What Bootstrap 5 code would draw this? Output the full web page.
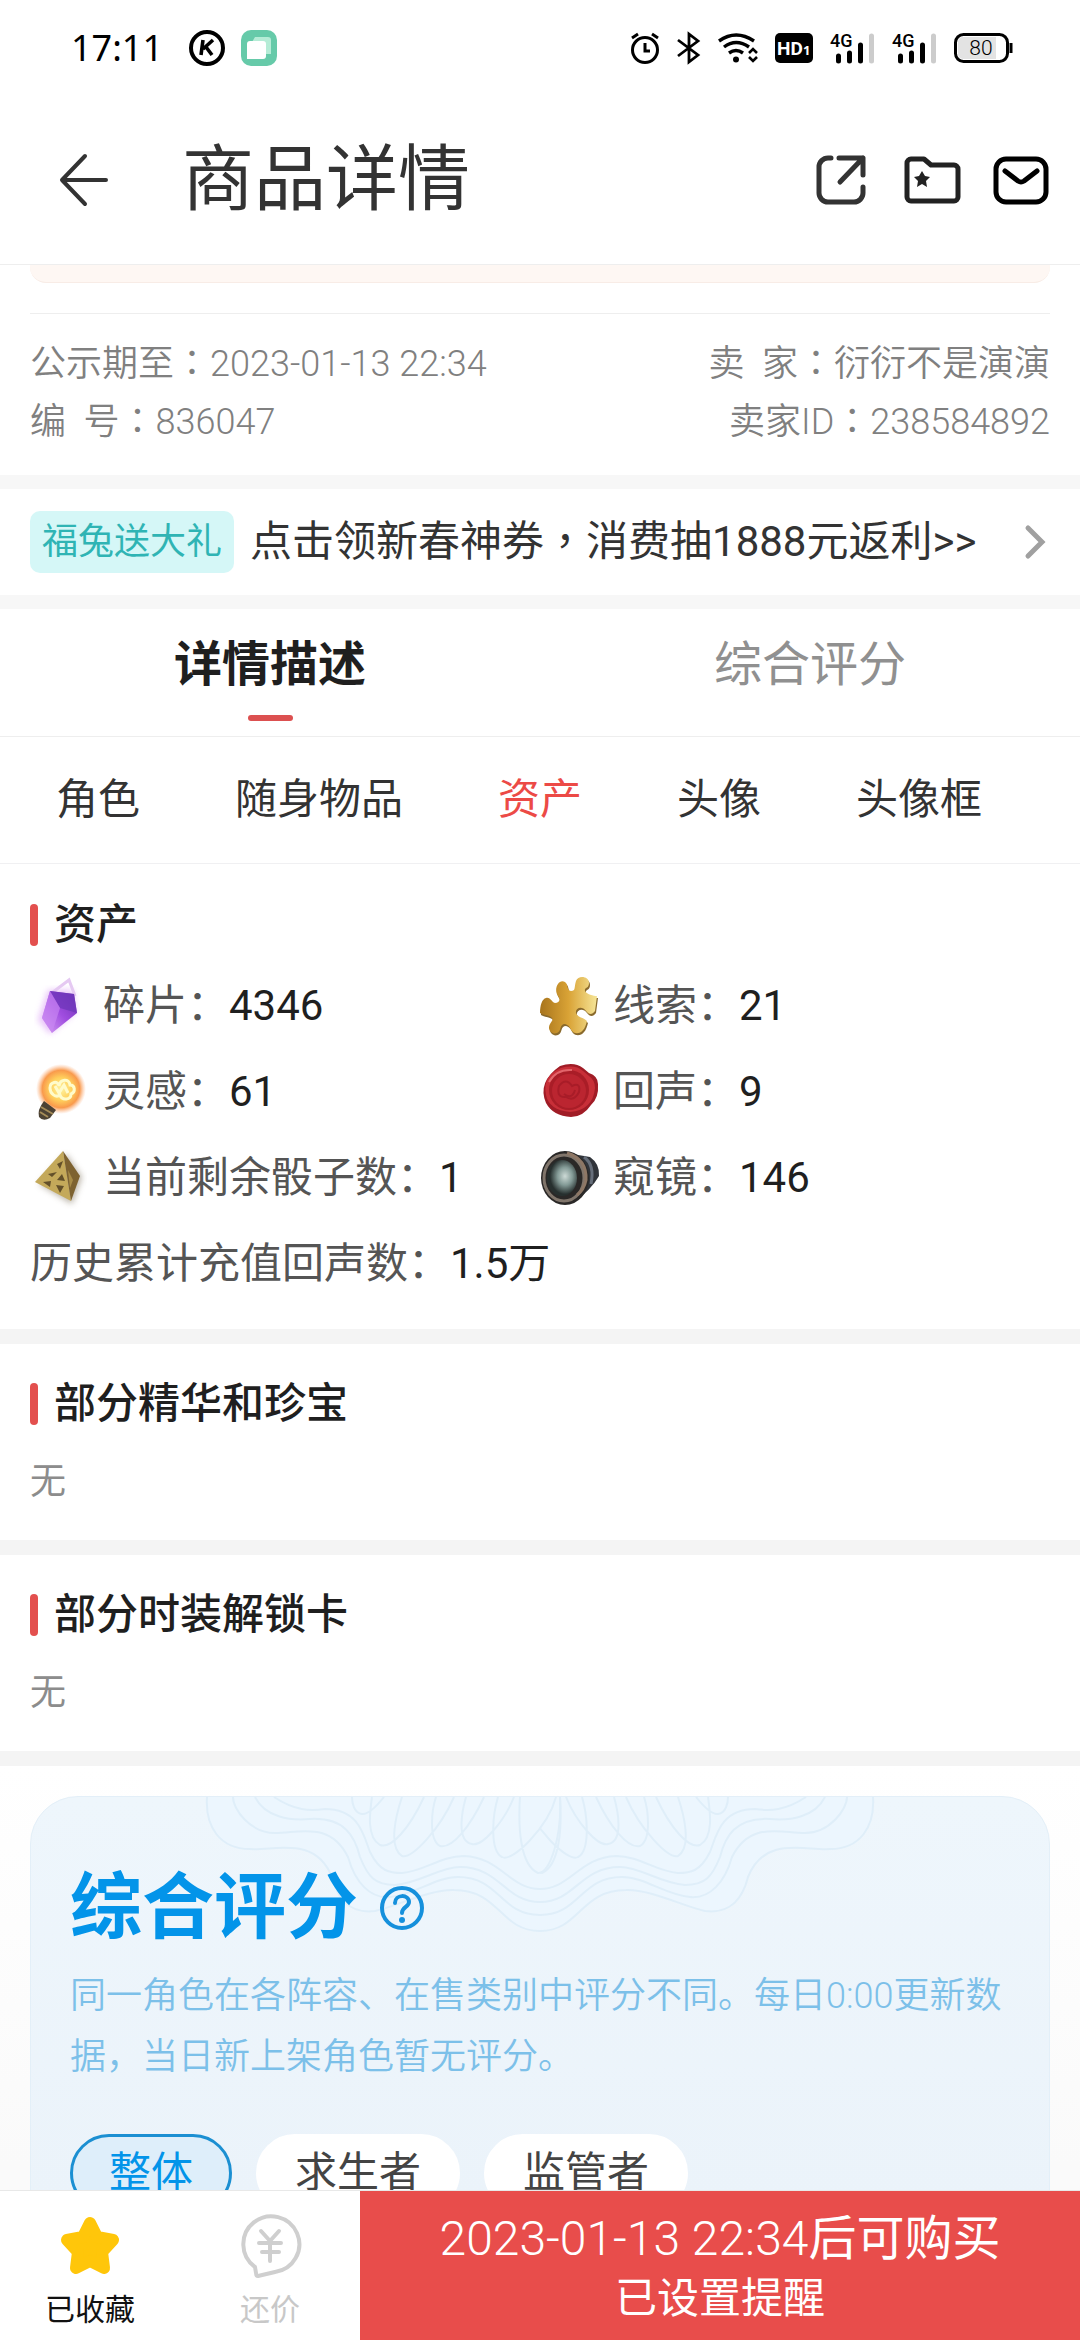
<!DOCTYPE html>
<html lang="zh-CN">
<head>
<meta charset="utf-8">
<meta name="viewport" content="width=device-width, initial-scale=1">
<title>商品详情</title>
<link href="https://cdn.jsdelivr.net/npm/bootstrap@5.3.0/dist/css/bootstrap.min.css" rel="stylesheet">
<style>
  :root { --ink: #1f1f1f; --text: #333; --soft: #555; --mute: #8c8c8c; --line: #eee; --red: #e84d4b; --blue: #0394e9; }
  body { font-family: Roboto, "Noto Sans CJK SC", sans-serif; color: var(--text); background: #fff; font-size: 42px; line-height: 60px; }
  button { color: inherit; font-family: inherit; }
  svg { display: block; flex: none; overflow: visible; }
  .plain-btn { border: 0; background: none; padding: 0; }
  .gutter { padding-left: 30px; padding-right: 30px; }

  .status-bar { height: 96px; padding: 0 68px 0 71px; color: #000; }
  .clock { font: 400 36px/48px "Noto Sans", sans-serif; width: 118px; }
  .status-icons { gap: 17px; }

  .title-bar { height: 169px; padding: 0 31px 0 56px; border-bottom: 1px solid var(--line); }
  .title-bar h1 { font-size: 72px; line-height: 84px; font-weight: 400; padding-left: 70px; }
  .title-tools { gap: 32px; }

  .page-body { min-height: 0; overflow-y: auto; scrollbar-width: none; }
  .page-body::-webkit-scrollbar { display: none; }
  .notice-tail { height: 18px; margin: 0 30px 30px; background: #fef7f3; border-bottom: 1px solid #f8ece6; border-radius: 0 0 16px 16px; }
  .meta-list { margin: 0 30px; padding: 21px 0 24px; border-top: 1px solid var(--line); font-size: 36px; line-height: 58px; font-weight: 350; color: #808080; }
  .mid { font-family: "Noto Sans CJK TC", sans-serif; line-height: 1; }
  .band { height: 14px; background: #f7f7f7; }
  .band-2 { height: 15px; background: #f4f4f4; }

  .promo { height: 106px; color: var(--text); text-decoration: none; }
  .promo-tag { background: #d5f7f7; color: #2fb4b4; border-radius: 10px; font-size: 36px; line-height: 62px; padding: 0 12px; margin-right: 16px; }

  .main-tabs { height: 128px; border-bottom: 1px solid var(--line); }
  .main-tabs button { font-size: 48px; line-height: 60px; color: #909090; padding: 26px 0 0; }
  .main-tabs .on { color: var(--ink); font-weight: 700; }
  .main-tabs .on::after { content: ""; display: block; width: 45px; height: 6px; border-radius: 3px; background: #dc5050; margin: 20px auto 0; }
  .sub-tabs { height: 127px; padding: 0 56px; gap: 95px; border-bottom: 1px solid #f0f0f2; }
  .sub-tabs .on { color: #ec4a46; }

  .sect-title { font-size: 42px; line-height: 60px; font-weight: 500; color: var(--ink); }
  .sect-title::before { content: ""; width: 8px; height: 42px; border-radius: 4px; background: #e3504e; margin-right: 16px; }
  .assets { padding-top: 31px; padding-bottom: 22px; }
  .asset-cell { height: 86px; color: var(--soft); }
  .asset-cell svg { margin-right: 13px; }
  .asset-val { color: var(--ink); }
  .block-none { padding-top: 30px; height: 196px; }
  .none-text { font-size: 36px; line-height: 60px; color: var(--mute); padding-top: 18px; }

  .score-wrap { padding-top: 30px; background: linear-gradient(#fff, #fafafa 400px); }
  .score-card { position: relative; overflow: hidden; border: 1px solid #e3eff8; border-radius: 48px; padding: 69px 39px 60px; background: linear-gradient(#eef6fc, #ebf3fa 400px); }
  .score-card > .waves { position: absolute; top: 0; left: 50%; margin-left: -340px; }
  .score-head { position: relative; gap: 22px; }
  .score-head h2 { font-size: 72px; line-height: 84px; font-weight: 700; color: var(--blue); }
  .score-note { position: relative; font-size: 36px; line-height: 61px; font-weight: 350; color: #7cc0e9; margin: 16px 0 46px; }
  .pills { gap: 24px; }
  .pill { border: 3px solid #fff; background: #fff; border-radius: 39px; padding: 0 36px; font-size: 42px; line-height: 72px; color: #444; }
  .pill.on { border-color: #1b8fd2; background: #deeefa; color: var(--blue); }

  .action-bar { height: 150px; background: #fff; border-top: 1px solid #e8e8e8; }
  .act { flex: 0 0 16.667%; font-size: 30px; line-height: 40px; color: #111; padding-top: 13px; }
  .act svg { margin: 0 auto 14px; }
  .act.off { color: #c8c8c8; }
  .buy { background: var(--red); color: #fff; font-size: 42px; line-height: 60px; padding: 6px 0 0; }
  .buy .when { font-size: 48px; }
</style>
</head>
<body>
<div class="vh-100 d-flex flex-column overflow-hidden">

  <div class="status-bar d-flex align-items-center flex-shrink-0">
    <span class="clock">17:11</span>
    <svg width="36" height="36" viewBox="0 0 36 36"><circle cx="18" cy="18" r="16" fill="none" stroke="#000" stroke-width="4"/><path d="M14 10l-2 15M24 10l-10 9M17 17l6 8" fill="none" stroke="#000" stroke-width="3.6"/></svg>
    <svg class="ms-3" width="36" height="36" viewBox="0 0 36 36"><rect width="36" height="36" rx="10" fill="#66caa9"/><path d="M14 7h13a3 3 0 0 1 3 3v14h-7V12H11z" fill="#b5ecd6"/><path d="M9 11h13a3 3 0 0 1 3 3v12a3 3 0 0 1-3 3H6V14a3 3 0 0 1 3-3z" fill="#fff"/></svg>
    <div class="status-icons d-flex align-items-center ms-auto">
      <svg width="30" height="32" viewBox="0 0 30 32" fill="none" stroke="#000" stroke-width="3"><circle cx="15" cy="18" r="12.5"/><path d="M15 11v8h5M2 6l6-4M28 6l-6-4"/></svg>
      <svg width="24" height="32" viewBox="0 0 24 32" fill="none" stroke="#000" stroke-width="2.8"><path d="M1 8l20 15-9 7V2l9 7L1 24"/></svg>
      <svg width="40" height="32" viewBox="0 0 40 32" fill="none" stroke="#000" stroke-width="3.4"><path d="M1 9q17-12 35 0M6 15q12-9 25 0M11 21q7-5 14 0"/><circle cx="18" cy="27.500" r="3" fill="#000" stroke="none"/><path d="M31 21l4-4 4 4M31 25l4 4 4-4" stroke-width="2.600"/></svg>
      <svg width="38" height="30" viewBox="0 0 38 30"><rect width="38" height="30" rx="5"/><text x="2" y="22" font-family="Roboto" font-weight="700" font-size="19" fill="#fff">HD</text><text x="28" y="22" font-family="Noto Sans" font-weight="700" font-size="13" fill="#fff">1</text></svg>
      <svg width="45" height="32" viewBox="0 0 45 32"><text x="0" y="15" font-family="Roboto" font-weight="500" font-size="18">4G</text><path d="M8.500 24v5M19.500 21v8M30.500 13v16" stroke="#000" stroke-width="5" stroke-linecap="round"/><path d="M41.500 4v25" stroke="#ccc" stroke-width="5" stroke-linecap="round"/></svg>
      <svg width="45" height="32" viewBox="0 0 45 32"><text x="0" y="15" font-family="Roboto" font-weight="500" font-size="18">4G</text><path d="M8.500 24v5M19.500 21v8M30.500 13v16" stroke="#000" stroke-width="5" stroke-linecap="round"/><path d="M41.500 4v25" stroke="#ccc" stroke-width="5" stroke-linecap="round"/></svg>
      <svg width="58" height="32" viewBox="0 0 58 32"><rect x="1.500" y="2.500" width="52" height="27" rx="8" fill="#fff" stroke="#000" stroke-width="3"/><path d="M9 5h33v22H9a5 5 0 0 1-5-5V10a5 5 0 0 1 5-5z" fill="#e3e3e3"/><path d="M57 11v10" stroke="#000" stroke-width="3"/><text x="27" y="23" text-anchor="middle" font-family="Roboto" font-weight="300" font-size="21">80</text></svg>
    </div>
  </div>

  <header class="title-bar d-flex align-items-center flex-shrink-0">
    <button class="plain-btn" type="button" aria-label="返回"><svg width="56" height="56" viewBox="0 0 56 56" fill="none" stroke="#333" stroke-width="4" stroke-linecap="round" stroke-linejoin="round"><path d="M50 28H6M29 4L6 28l23 24"/></svg></button>
    <h1 class="mb-0">商品详情</h1>
    <div class="title-tools d-flex ms-auto">
      <button class="plain-btn" type="button" aria-label="分享"><svg width="58" height="54" viewBox="0 0 58 54" fill="none" stroke="#333" stroke-width="5" stroke-linecap="round" stroke-linejoin="round"><path d="M16 5h-3a9 9 0 0 0-9 9v26a9 9 0 0 0 9 9h26a9 9 0 0 0 9-9V34M24 5h24v17M48 5L25 29"/></svg></button>
      <button class="plain-btn" type="button" aria-label="收藏夹"><svg width="56" height="54" viewBox="0 0 56 54" fill="none" stroke="#222" stroke-width="5" stroke-linejoin="round"><path d="M6 6h13l7 6h23a4 4 0 0 1 4 4v28a4 4 0 0 1-4 4H6a4 4 0 0 1-4-4V10a4 4 0 0 1 4-4z"/><path d="M17 18l3 5 5 1-4 4 1 6-5-3-5 3 1-6-4-4 5-1z" fill="#222" stroke="none"/></svg></button>
      <button class="plain-btn" type="button" aria-label="消息"><svg width="56" height="54" viewBox="0 0 56 54" fill="none" stroke="#000" stroke-width="5" stroke-linecap="round" stroke-linejoin="round"><rect x="3" y="6" width="50" height="43" rx="10"/><path d="M12 18l13 10q3 2 6 0l13-10"/></svg></button>
    </div>
  </header>

  <main class="page-body flex-grow-1">
    <div class="notice-tail"></div>
    <div class="meta-list">
      <div class="d-flex justify-content-between"><span>公示期至<span class="mid" lang="zh-TW">：</span>2023-01-13 22:34</span><span>卖&nbsp; 家<span class="mid" lang="zh-TW">：</span>衍衍不是演演</span></div>
      <div class="d-flex justify-content-between"><span>编&nbsp; 号<span class="mid" lang="zh-TW">：</span>836047</span><span>卖家ID<span class="mid" lang="zh-TW">：</span>238584892</span></div>
    </div>
    <div class="band"></div>
    <a class="promo gutter d-flex align-items-center" href="#">
      <span class="promo-tag">福兔送大礼</span>
      <span>点击领新春神券<span class="mid" lang="zh-TW">，</span>消费抽1888元返利&gt;&gt;</span>
      <svg class="ms-auto" width="30" height="40" viewBox="0 0 30 40" fill="none" stroke="#a0a0a0" stroke-width="5" stroke-linecap="round"><path d="M8 6l14 14L8 34"/></svg>
    </a>
    <div class="band"></div>

    <nav class="main-tabs d-flex align-items-start" aria-label="详情">
      <button class="plain-btn w-50 on" type="button">详情描述</button>
      <button class="plain-btn w-50" type="button">综合评分</button>
    </nav>
    <nav class="sub-tabs d-flex align-items-center" aria-label="分类">
      <button class="plain-btn" type="button">角色</button>
      <button class="plain-btn" type="button">随身物品</button>
      <button class="plain-btn on" type="button">资产</button>
      <button class="plain-btn" type="button">头像</button>
      <button class="plain-btn" type="button">头像框</button>
    </nav>

    <section class="assets gutter">
      <h2 class="sect-title d-flex align-items-center mb-2">资产</h2>
      <div class="row g-0">
        <div class="col-6 asset-cell d-flex align-items-center">
          <svg width="60" height="60" viewBox="0 0 60 60"><defs><linearGradient id="gem" x1="1" y1="0" x2="0" y2="1"><stop offset="0" stop-color="#6a2fb0"/><stop offset=".5" stop-color="#a04de0"/><stop offset="1" stop-color="#d9a4f4"/></linearGradient><filter id="soft"><feGaussianBlur stdDeviation="3"/></filter></defs><path d="M18 14L8 44l12 14 26-22-3-22z" fill="#e3b4f8" filter="url(#soft)" opacity=".8"/><path d="M23 16L39 4l6 16" fill="none" stroke="#e5c9f2" stroke-width="3"/><path d="M20 15l24 3 3 19-25 20-10-15z" fill="url(#gem)"/><path d="M20 15l10 17 17 5-3-19z" fill="#6e35ba" opacity=".75"/><path d="M20 15l-8 27 10 15 8-25z" fill="#c987f2" opacity=".65"/></svg>
          <span>碎片：</span><span class="asset-val">4346</span>
        </div>
        <div class="col-6 asset-cell d-flex align-items-center">
          <svg width="60" height="60" viewBox="0 0 60 60"><defs><linearGradient id="gold" x1="0" y1="0" x2="1" y2="0"><stop offset="0" stop-color="#a8741c"/><stop offset=".5" stop-color="#d9a336"/><stop offset="1" stop-color="#f6e597"/></linearGradient></defs><path d="M18 21c-5-7 1-18 7-14 4 3 1 8 6 9 5 0 3-4 5-10 2-6 13-5 13 2 0 6-5 4-4 8 1 3 9 5 12 5l-2 15c-3 4-6 4-9 0-4-6-11-3-10 2 2 5 7 4 11 8-2 9-6 13-12 12-5-1-4-8-10-9-6 0-3 7-8 9-6 2-10-4-7-9 2-4 4-4 1-7-3-2-8-2-11-4 0-8 2-14 6-15 5-1 5 4 9 5 4 0 6-3 3-7z" fill="#8a6a2c" transform="translate(1 1)"/><path d="M18 20c-5-7 1-18 7-14 4 3 1 8 6 9 5 0 3-4 5-10 2-6 13-5 13 2 0 6-5 4-4 8 1 3 9 5 12 5l-2 15c-3 4-6 4-9 0-4-6-11-3-10 2 2 5 7 4 11 8-2 9-6 13-12 12-5-1-4-8-10-9-6 0-3 7-8 9-6 2-10-4-7-9 2-4 4-4 1-7-3-2-8-2-11-4 0-8 2-14 6-15 5-1 5 4 9 5 4 0 6-3 3-7z" fill="url(#gold)"/></svg>
          <span>线索：</span><span class="asset-val">21</span>
        </div>
        <div class="col-6 asset-cell d-flex align-items-center">
          <svg width="60" height="60" viewBox="0 0 60 60"><defs><radialGradient id="glow"><stop offset="0" stop-color="#fff3a0"/><stop offset=".45" stop-color="#ffd05c"/><stop offset=".75" stop-color="#f99a4c"/><stop offset="1" stop-color="#fdba90" stop-opacity="0"/></radialGradient></defs><circle cx="31" cy="27" r="25" fill="url(#glow)"/><path d="M20 26c0-6 8-8 9-2 1-7 10-8 11-1 5 0 6 7 1 9 0 6-9 7-11 1-4 3-10-1-10-7zM25 24l4 7 5-8 4 8" fill="none" stroke="#fffbcb" stroke-width="3"/><path d="M14 39l12 9-6 8q-7 4-11-1-2-7 5-16z" fill="#4c4234"/><path d="M11 45l12 7M10 50l8 5" stroke="#a58c58" stroke-width="2"/></svg>
          <span>灵感：</span><span class="asset-val">61</span>
        </div>
        <div class="col-6 asset-cell d-flex align-items-center">
          <svg width="60" height="60" viewBox="0 0 60 60"><path d="M20 4q14-5 23 2l6 5q9 3 9 11 1 14-7 21-8 12-20 12Q13 54 6 41-3 20 20 4z" fill="#a01c26"/><path d="M21 6q14-4 22 3l6 5q6 4 6 12-2 22-25 24Q9 48 6 33 2 14 21 6z" fill="#c82f38"/><circle cx="29" cy="28" r="20" fill="#a91d27"/><circle cx="29" cy="29" r="17" fill="#bb2530"/><path d="M19 24q7-9 13 0 9-4 7 6-5 10-13 5-10 1-7-11zm5 8q8 6 11-4" fill="none" stroke="#a81c28" stroke-width="2"/><path d="M9 20Q16 7 32 8" fill="none" stroke="#e2656b" stroke-width="2"/></svg>
          <span>回声：</span><span class="asset-val">9</span>
        </div>
        <div class="col-6 asset-cell d-flex align-items-center">
          <svg width="60" height="60" viewBox="0 0 60 60"><path d="M36 6L9 36l33 20 10-27z" fill="#776b52" opacity=".5" filter="url(#soft)"/><path d="M33 3L5 34l36 19z" fill="#c4a95a"/><path d="M33 3l17 25-9 25z" fill="#7d6230"/><path d="M27 16l6-3-3 8zM18 26l9-2-5 5zM32 26l3 7-8-1zM13 34l8-1-1 6zM26 37l8 1-4 7z" fill="#63502a"/><path d="M38 22l5 10-3 8z" fill="#a78b47"/></svg>
          <span>当前剩余骰子数：</span><span class="asset-val">1</span>
        </div>
        <div class="col-6 asset-cell d-flex align-items-center">
          <svg width="60" height="60" viewBox="0 0 60 60"><defs><radialGradient id="lens" cx=".6" cy=".45"><stop offset="0" stop-color="#cddad6"/><stop offset=".5" stop-color="#839a96"/><stop offset="1" stop-color="#27302f"/></radialGradient></defs><path d="M24 3q12 4 26 6 10 7 9 19-8 14-26 27z" fill="#30343a"/><path d="M44 9q11 8 7 27" fill="none" stroke="#666e7a" stroke-width="3"/><ellipse cx="25" cy="30" rx="24" ry="27" fill="#2a2827"/><ellipse cx="24" cy="30" rx="20" ry="23" fill="none" stroke="#80756b" stroke-width="3"/><path d="M27 5q20 6 19 27-2 10-9 15" fill="none" stroke="#8e7765" stroke-width="3"/><ellipse cx="22" cy="30" rx="15" ry="18" fill="url(#lens)"/></svg>
          <span>窥镜：</span><span class="asset-val">146</span>
        </div>
        <div class="col-12 asset-cell d-flex align-items-center"><span>历史累计充值回声数：</span><span class="asset-val">1.5万</span></div>
      </div>
    </section>
    <div class="band-2"></div>
    <section class="block-none gutter">
      <h2 class="sect-title d-flex align-items-center mb-0">部分精华和珍宝</h2>
      <p class="none-text mb-0">无</p>
    </section>
    <div class="band-2"></div>
    <section class="block-none gutter">
      <h2 class="sect-title d-flex align-items-center mb-0">部分时装解锁卡</h2>
      <p class="none-text mb-0">无</p>
    </section>
    <div class="band-2"></div>

    <section class="score-wrap gutter">
      <div class="score-card">
        <svg class="waves" width="680" height="140" viewBox="-340 0 680 140" fill="none" stroke="#dfeef9" stroke-width="2">
          <defs><g id="half">
            <path d="M333 0C335 30 320 52 290 52 265 54 225 38 208 80 200 112 180 116 165 114 145 110 110 92 86 93 40 93 40 134 0 134V0z" fill="#ecf6fe" stroke="none"/>
            <path d="M333 0C335 30 320 52 290 52 265 54 225 38 208 80 200 112 180 116 165 114 145 110 110 92 86 93 40 93 40 134 0 134"/>
            <path d="M307 0C307 12 290 36 265 36 240 36 210 24 192 60 185 85 170 102 150 100 125 98 105 80 82 80 40 80 40 118 0 118"/>
            <path d="M285 0C275 20 250 24 230 22 195 20 185 40 180 60 172 80 165 88 145 88 120 86 100 70 80 70 40 70 35 105 0 105"/>
            <path d="M266 0C245 14 230 14 215 12 180 12 176 40 170 55 160 75 150 76 138 76 115 74 100 59 76 59 40 60 30 92 0 92"/>
            <path d="M-16 0C-8 30 28 66 38 60 50 54 48 20 42 0M26 0C36 25 58 50 68 47 84 44 78 14 74 0M56 0C70 30 88 52 100 49 112 42 108 12 104 0M86 0C100 32 128 62 138 59 152 50 144 18 138 0M116 0C130 30 148 52 160 48 174 40 170 14 168 0M156 0C164 10 172 18 178 17 186 16 188 6 188 0M-20 0C-22 40-10 76 2 76 20 68 22 30 20 0"/>
          </g></defs>
          <use href="#half"/><use href="#half" transform="scale(-1 1)"/>
        </svg>
        <div class="score-head d-flex align-items-center">
          <h2 class="mb-0">综合评分</h2>
          <button class="plain-btn" type="button" aria-label="说明"><svg width="44" height="44" viewBox="0 0 44 44" fill="none" stroke="#1590dc" stroke-width="4"><circle cx="22" cy="22" r="20"/><path d="M15 17c0-9 14-9 14-1 0 5-7 5-7 11" stroke-linecap="round"/><circle cx="22" cy="34" r="3" fill="#1590dc" stroke="none"/></svg></button>
        </div>
        <p class="score-note">同一角色在各阵容、在售类别中评分不同。每日0:00更新数据，当日新上架角色暂无评分。</p>
        <div class="pills d-flex">
          <button class="pill on" type="button">整体</button>
          <button class="pill" type="button">求生者</button>
          <button class="pill" type="button">监管者</button>
        </div>
      </div>
    </section>
  </main>

  <footer class="action-bar d-flex flex-shrink-0">
    <button class="plain-btn act" type="button">
      <svg width="62" height="62" viewBox="0 0 62 62"><path d="M31 9l7 14 16 3-11 12 2 16-14-7-14 7 2-16L8 26l16-3z" fill="#ffc60a" stroke="#ffc60a" stroke-width="12" stroke-linejoin="round"/></svg>
      已收藏
    </button>
    <button class="plain-btn act off" type="button">
      <svg width="62" height="62" viewBox="0 0 62 62" fill="none" stroke="#cfcfcf" stroke-width="4" stroke-linecap="round" stroke-linejoin="round"><path d="M16 53A28 28 0 1 1 36 58l-17 4q-2 0-2-3z"/><path d="M22 17l9 10 9-10M20 29h22M23 38h17M31 27v20"/></svg>
      还价
    </button>
    <button class="plain-btn buy flex-grow-1" type="button"><span class="when d-block"><span class="fw-light">2023-01-13 22:34</span>后可购买</span>已设置提醒</button>
  </footer>
</div>
<script src="https://cdn.jsdelivr.net/npm/bootstrap@5.3.0/dist/js/bootstrap.bundle.min.js"></script>
</body>
</html>
